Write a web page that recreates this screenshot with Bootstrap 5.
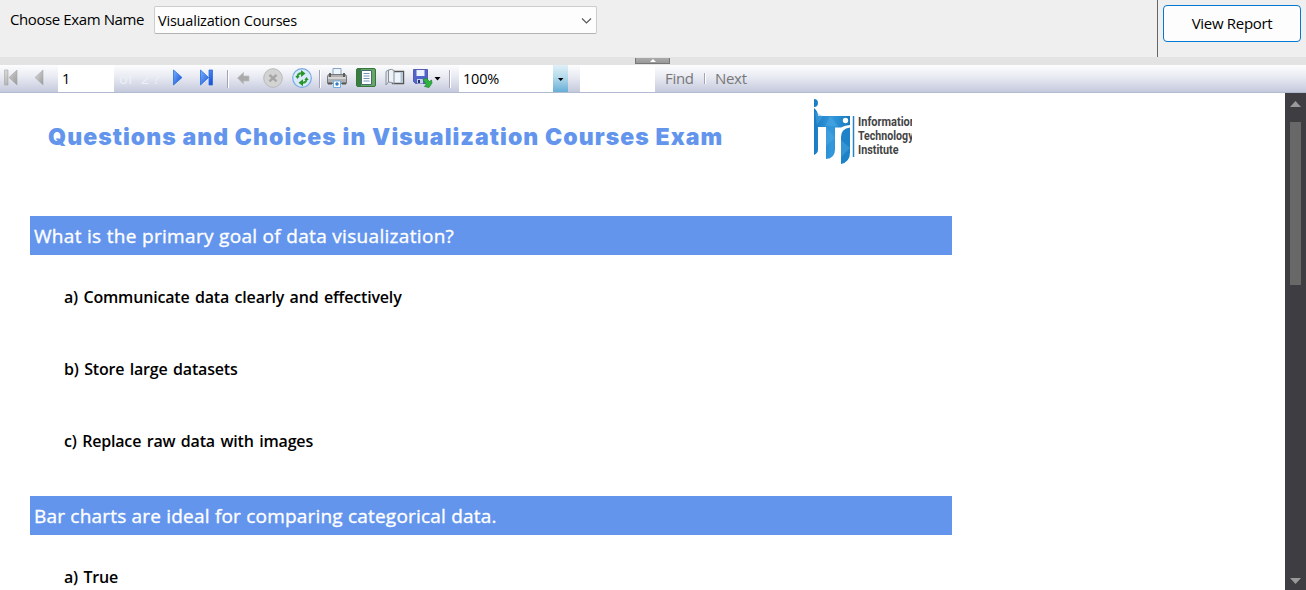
<!DOCTYPE html>
<html lang="en">
<head>
<meta charset="utf-8">
<meta name="viewport" content="width=device-width, initial-scale=1">
<title>Report Viewer</title>
<link rel="stylesheet" href="https://cdn.jsdelivr.net/npm/bootstrap@5.3.0/dist/css/bootstrap.min.css">
<style>
body{font-family:"Open Sans","Noto Sans",sans-serif;font-size:15px;color:#000;background:#fff;line-height:20px}
svg{display:block;flex:none}
.params{height:57px;background:#efefef}
.param-label{width:154px;padding:9px 0 0 10px;letter-spacing:-.4px}
.exam-select{width:443px;height:28px;margin-top:6px;padding:1px 4px 0 3px;background:#fdfdfd;border:1px solid #ccc;border-bottom-color:#b3b3b3;border-radius:2px;font-size:14.5px;letter-spacing:-.2px}
.view-pane{width:149px;border-left:1px solid #666;padding:5px 5px 0}
.view-btn{width:138px;height:37px;padding:0;background:#fdfdfd;border:1px solid #0078d4;border-radius:4px;font-size:15px;letter-spacing:-.3px;color:#000}
.splitter{height:8px;background:#e3e3e3;padding-left:635px}
.handle{width:35px;height:6px;margin-top:1px;background:linear-gradient(#aaa,#999);border:solid #777;border-width:0 1px 1px}
.tools{height:28px;background:linear-gradient(#fdfdfe,#e8eaf2 45%,#c4c9dc);border-bottom:1px solid #b2bad0;
 grid-template-columns:30px 28px 56px 54px 28px 30px 8px 24px 30px 30px 6px 29px 29px 28px 38px 11px 94px 16px 11px 75px 49px 6px 90px 1fr;align-items:center}
.tools>*{white-space:nowrap}
.field{height:27px;background:#fff;padding:4px 0 0 4px;font-size:14.5px;letter-spacing:-.2px}
.pages{color:#edf0f5;padding-left:5px;letter-spacing:.2px;font-size:14.5px}
.rule{width:2px;height:18px;margin-left:1px;border-left:1px solid #a3a3b5;border-right:1px solid #fff}
.drop{width:15px;height:27px;background:linear-gradient(#e0f0f8,#b5daec 45%,#66aed6)}
.find{color:#777;letter-spacing:-.3px;padding:0 0 2px 10px}
.next{padding-left:5px}
.report{height:497px}
.heading{height:123px;padding-left:48px}
.title{width:765px;margin:0;padding-top:31px;font:900 23px/26px Inter,"Liberation Sans",sans-serif;letter-spacing:1.06px;color:#6495ed;white-space:nowrap}
.question{width:922px;height:39px;margin:0 0 6px 30px;padding:1px 0 0 4px;background:#6495ed;color:#fff;font-size:19px;-webkit-text-stroke:.35px #fff;letter-spacing:.2px;line-height:39px}
.wide{letter-spacing:.31px}
.answer{height:72px;padding-left:64px;font-size:16px;font-weight:600;line-height:72px;word-spacing:1.5px;letter-spacing:-.18px}
.section{height:280px}
.scroller{width:21px;background:#3e3e42;padding:7px 5px 6px}
.thumb{width:11px;height:163px;background:#686868;margin-top:15px}
</style>
</head>
<body class="vh-100 overflow-hidden">
<header class="params d-flex">
 <div class="param-label text-nowrap">Choose Exam Name</div>
 <div class="exam-select d-flex align-items-center justify-content-between"><span>Visualization Courses</span>
  <svg width="11" height="8"><path d="M1 1.500l4.500 4.500L10 1.500" fill="none" stroke="#555" stroke-width="1.1"/></svg></div>
 <div class="view-pane ms-auto"><button class="btn view-btn">View Report</button></div>
</header>
<div class="splitter d-flex"><div class="handle"><svg width="33" height="5"><path d="M14 4l3-3 3 3z" fill="#fff"/></svg></div></div>
<nav class="tools d-grid">
 <svg width="30" height="27"><defs>
  <linearGradient id="gr" x2="1" y2="1"><stop stop-color="#ddd"/><stop offset="1" stop-color="#999"/></linearGradient>
  <linearGradient id="bl" x2="1" y2="1"><stop stop-color="#79b6ff"/><stop offset="1" stop-color="#1046d0"/></linearGradient></defs>
  <path d="M4.500 5h3.500v15H4.500zM17 5v15l-8-7.500z" fill="url(#gr)" stroke="#a4a4a4" stroke-width=".6"/></svg>
 <svg width="28" height="27"><path d="M13 5v15l-8-7.500z" fill="url(#gr)" stroke="#aaa" stroke-width=".6"/></svg>
 <div class="field">1</div>
 <span class="pages">of&nbsp; 2 ?</span>
 <svg width="28" height="27"><path d="M5.500 5v15l8.500-7.500z" fill="url(#bl)" stroke="#286de0" stroke-width=".8"/></svg>
 <svg width="30" height="27"><path d="M4.500 5v15l8-7.500zM13 5h3.500v15H13z" fill="url(#bl)" stroke="#286de0" stroke-width=".8"/></svg>
 <i class="rule"></i>
 <svg width="24" height="27"><path d="M3.500 13l6-5.500v3.500H15v5H9.500v3z" fill="#aaa" stroke="#bbb" stroke-width=".7"/></svg>
 <svg width="30" height="27"><circle cx="15" cy="13" r="9.300" fill="#d3d3d3" stroke="#b9b9b9"/><path d="M11.500 9.800l7 6.500M18.500 9.800l-7 6.500" stroke="#a6a6a6" stroke-width="2.500"/></svg>
 <svg width="30" height="27"><circle cx="14" cy="13" r="9.300" fill="#dbeafa" stroke="#75a9e4" stroke-width="1.200"/><g fill="none" stroke="#2f9d2f" stroke-width="2"><path d="M9.500 12c0-2 1.500-3.700 4-3.700M18.500 14c0 2-1.500 3.700-4 3.700"/></g><path d="M13 5l4.500 3.500L13 12zM15 14.200l-4.500 3.500 4.500 3.500zM7.300 11h4.400l-2.200 3zM16.300 15h4.400l-2.200-3z" fill="#289528"/></svg>
 <i class="rule"></i>
 <svg width="29" height="27"><path d="M9 11V3.500h8V11" fill="#edf5ff" stroke="#84a2c6"/><path d="M3.500 11.500q0-2 2-2h15q2 0 2 2v7h-19z" fill="#b0b0b3" stroke="#777"/><path d="M4 13h18" stroke="#d5d5d5" stroke-width="2"/><path d="M6 8v4M20 8v4M4 18.500h4M18 18.500h4" stroke="#555" stroke-width="1.800"/><path d="M9.500 16h7v6.500h-7z" fill="#fff" stroke="#6faee5"/><circle cx="13" cy="19" r="1.700" fill="#3179be"/></svg>
 <svg width="29" height="27"><rect x="3.500" y="3.500" width="19" height="18" rx="1.500" fill="#67a869" stroke="#38743d"/><path d="M4 4h4v17H4z" fill="#397d42"/><path d="M8.500 5.500h10v14h-10z" fill="#fff" stroke="#466c72"/><path d="M10.500 8.500h6M10.500 11h6M10.500 13.500h6M10.500 16h6" stroke="#7293bc"/></svg>
 <svg width="28" height="27"><path d="M10.500 6.500h11v12h-11z" fill="#eef4fb" stroke="#555" stroke-width="1.400"/><path d="M18.500 7h2.300v11h-2.300z" fill="#b5c5d6"/><path d="M4 6.500l2.500-1.500v12L4 20z" fill="#dfe4ea" stroke="#89929c"/><path d="M6.500 5q3-1.500 5.500.500v13q-2.500-1.500-5.500-1.500z" fill="#eef2f6" stroke="#858e98"/></svg>
 <svg width="38" height="27"><path d="M3.500 4.500h14v14h-12l-2-2z" fill="#5065ca" stroke="#565db0"/><path d="M6.500 5h8v6h-8z" fill="#edf2ff"/><path d="M7 14h6v4.500H7z" fill="#c8d0ea"/><path d="M8 15h2v3H8z" fill="#25356b"/><path d="M13 14.500l3-1.500 3.500 3.500 2-1.500v0l.5 3-3 4.500-4.500-1 1.500-2z" fill="#31b23f" stroke="#17862b" stroke-width=".7"/><path d="M24.500 12h6l-3 3.500z" fill="#000"/></svg>
 <i class="rule"></i>
 <div class="field">100%</div>
 <div class="drop"><svg width="15" height="27"><path d="M5 13h5.500L7.700 16z"/></svg></div>
 <span></span><div class="field"></div>
 <span class="find">Find</span><i class="rule" style="height:11px;margin:0"></i><span class="find next">Next</span>
</nav>
<main class="report d-flex">
 <div class="flex-grow-1 overflow-hidden">
  <div class="heading d-flex">
   <h1 class="title">Questions and Choices in Visualization Courses Exam</h1>
   <svg width="100" height="72" viewBox="813 93 100 72"><defs><linearGradient id="lg"><stop stop-color="#1a7bc2"/><stop offset=".5" stop-color="#3399dc"/><stop offset="1" stop-color="#1678bd"/></linearGradient></defs>
    <path d="M814 99q4 0 4 4t-4 4zM814 108q4 3 4 8h32v9q-5 0-9 2.500h-6v22q0 9-9 9.500V127h-8v23q0 3-4 5z" fill="url(#lg)"/>
    <path d="M850 127.500v25q0 9.500-9 11.500V137q0-8.500 9-9.500z" fill="#1e82c8"/><path d="M815 112l8 4-6 9zM826 127l9 11-9 8zM841 140l9 8-9 9zM830 116l8 10h-13z" fill="#57b0e6" opacity=".4"/><circle cx="845.500" cy="120.500" r="2.700" fill="#fff"/><path d="M853.500 116v41" stroke="#2682c3" stroke-width="1.500"/>
    <g font-family="Roboto" font-size="12" font-weight="700" fill="#444"><text x="858" y="126" textLength="58" lengthAdjust="spacingAndGlyphs">Information</text><text x="858" y="140" textLength="55.500" lengthAdjust="spacingAndGlyphs">Technology</text><text x="858" y="154" textLength="40.500" lengthAdjust="spacingAndGlyphs">Institute</text></g><path d="M912 93h2v72h-2z" fill="#fff"/></svg>
  </div>
  <section class="section"><div class="question wide">What is the primary goal of data visualization?</div>
   <div class="answer">a) Communicate data clearly and effectively</div><div class="answer">b) Store large datasets</div><div class="answer">c) Replace raw data with images</div></section>
  <section class="section"><div class="question">Bar charts are ideal for comparing categorical data.</div><div class="answer">a) True</div></section>
 </div>
 <aside class="scroller d-flex flex-column"><svg width="11" height="7"><path d="M0 7l5.500-6L11 7z" fill="#999"/></svg><div class="thumb"></div><svg class="mt-auto" width="11" height="7"><path d="M0 1h11L5.500 7z" fill="#999"/></svg></aside>
</main>
<script src="https://cdn.jsdelivr.net/npm/bootstrap@5.3.0/dist/js/bootstrap.bundle.min.js"></script>
</body>
</html>
